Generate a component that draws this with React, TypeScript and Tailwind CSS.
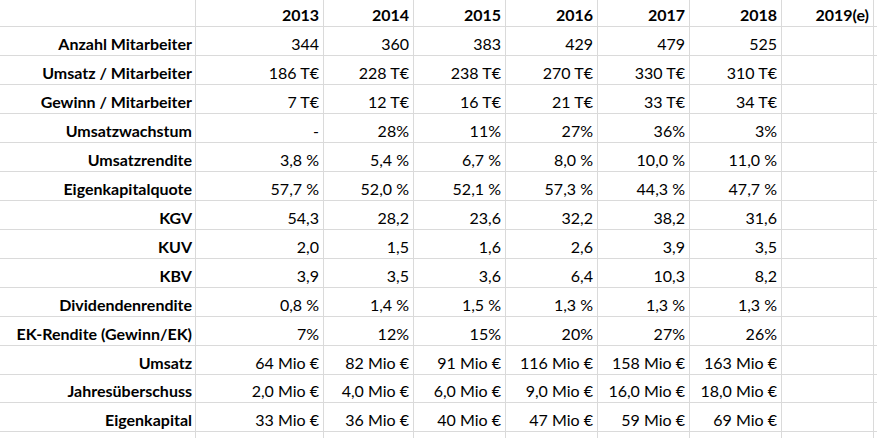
import React from "react";

const years = ["2013", "2014", "2015", "2016", "2017", "2018", "2019(e)"];

const rows: [string, string[], number][] = [
  ["Anzahl Mitarbeiter", ["344", "360", "383", "429", "479", "525", ""], 29],
  ["Umsatz / Mitarbeiter", ["186 T€", "228 T€", "238 T€", "270 T€", "330 T€", "310 T€", ""], 29],
  ["Gewinn / Mitarbeiter", ["7 T€", "12 T€", "16 T€", "21 T€", "33 T€", "34 T€", ""], 29],
  ["Umsatzwachstum", ["-", "28%", "11%", "27%", "36%", "3%", ""], 29],
  ["Umsatzrendite", ["3,8 %", "5,4 %", "6,7 %", "8,0 %", "10,0 %", "11,0 %", ""], 29],
  ["Eigenkapitalquote", ["57,7 %", "52,0 %", "52,1 %", "57,3 %", "44,3 %", "47,7 %", ""], 29],
  ["KGV", ["54,3", "28,2", "23,6", "32,2", "38,2", "31,6", ""], 29],
  ["KUV", ["2,0", "1,5", "1,6", "2,6", "3,9", "3,5", ""], 29],
  ["KBV", ["3,9", "3,5", "3,6", "6,4", "10,3", "8,2", ""], 29],
  ["Dividendenrendite", ["0,8 %", "1,4 %", "1,5 %", "1,3 %", "1,3 %", "1,3 %", ""], 29],
  ["EK-Rendite (Gewinn/EK)", ["7%", "12%", "15%", "20%", "27%", "26%", ""], 29],
  ["Umsatz", ["64 Mio €", "82 Mio €", "91 Mio €", "116 Mio €", "158 Mio €", "163 Mio €", ""], 29],
  ["Jahresüberschuss", ["2,0 Mio €", "4,0 Mio €", "6,0 Mio €", "9,0 Mio €", "16,0 Mio €", "18,0 Mio €", ""], 28],
  ["Eigenkapital", ["33 Mio €", "36 Mio €", "40 Mio €", "47 Mio €", "59 Mio €", "69 Mio €", ""], 29],
];

const colW = ["w-[128px]", "w-[90px]", "w-[92px]", "w-[92px]", "w-[92px]", "w-[92px]", "w-[92px]"];

function Row({ label, cells, h, bold, last }: { label: string; cells: string[]; h: string; bold?: boolean; last?: boolean }) {
  return (
    <div className={`flex ${h} ${last ? "" : "border-b border-[#dadada]"}`}>
      <div className="w-[196px] shrink-0 border-r border-[#dadada] flex items-end justify-end pr-[3px] pb-[3px] font-bold">
        {label}
      </div>
      {cells.map((c, i) => (
        <div
          key={i}
          className={`${colW[i]} shrink-0 border-r border-[#dadada] flex items-end justify-end pr-[4px] pb-[3px] ${bold ? "font-bold" : ""}`}
        >
          {c}
        </div>
      ))}
      <div className="flex-1" />
    </div>
  );
}

export default function App() {
  return (
    <div
      className="w-[877px] h-[438px] overflow-hidden bg-white text-black text-[16px] leading-none whitespace-nowrap"
      style={{ fontFamily: "Lato, 'Open Sans', sans-serif" }}
    >
      <Row label="" cells={years} h="h-[27px]" bold />
      {rows.map(([l, c, h]) => (
        <Row key={l} label={l} cells={c} h={h === 28 ? "h-[28px]" : "h-[29px]"} />
      ))}
      <Row label="" cells={["", "", "", "", "", "", ""]} h="h-[20px]" last />
    </div>
  );
}
